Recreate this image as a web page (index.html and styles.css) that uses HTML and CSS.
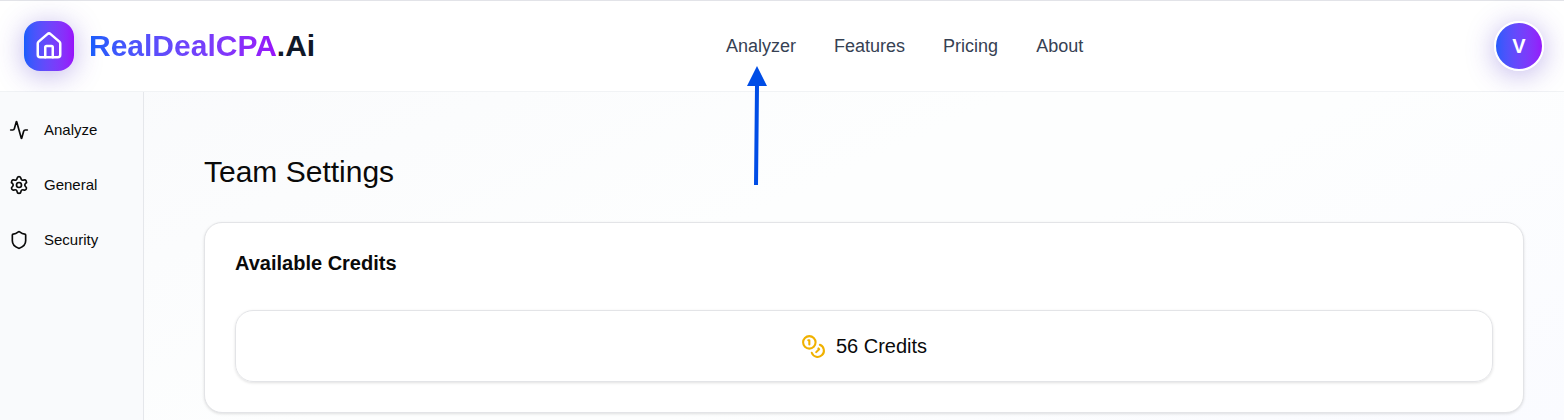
FILE: index.html
```html
<!DOCTYPE html>
<html lang="en">
<head>
<meta charset="utf-8">
<meta name="viewport" content="width=device-width, initial-scale=1">
<title>Team Settings</title>
<link rel="stylesheet" href="styles.css">
</head>
<body>
<header class="header">
  <a class="brand" href="#">
    <span class="brand-mark">
      <svg class="icon-home" viewBox="0 0 24 24" aria-hidden="true"><path d="M15 21v-8a1 1 0 0 0-1-1h-4a1 1 0 0 0-1 1v8"/><path d="M3 10a2 2 0 0 1 .709-1.528l7-5.999a2 2 0 0 1 2.582 0l7 5.999A2 2 0 0 1 21 10v9a2 2 0 0 1-2 2H5a2 2 0 0 1-2-2z"/></svg>
    </span>
    <span class="brand-text"><span class="brand-name">RealDealCPA</span><span>.Ai</span></span>
  </a>
  <nav class="nav">
    <a href="#">Analyzer</a>
    <a href="#">Features</a>
    <a href="#">Pricing</a>
    <a href="#">About</a>
  </nav>
  <button class="avatar" type="button">V</button>
</header>
<div class="layout">
  <aside class="sidebar">
    <a class="side-link" href="#">
      <svg class="side-icon" viewBox="0 0 24 24" aria-hidden="true"><path d="M22 12h-2.480a2 2 0 0 0-1.930 1.460l-2.350 8.360a.25.25 0 0 1-.480 0L9.240 2.180a.25.25 0 0 0-.480 0l-2.350 8.360A2 2 0 0 1 4.490 12H2"/></svg>
      Analyze
    </a>
    <a class="side-link" href="#">
      <svg class="side-icon" viewBox="0 0 24 24" aria-hidden="true"><path d="M9.671 4.136a2.340 2.340 0 0 1 4.659 0 2.340 2.340 0 0 0 3.319 1.915 2.340 2.340 0 0 1 2.330 4.033 2.340 2.340 0 0 0 0 3.831 2.340 2.340 0 0 1-2.330 4.033 2.340 2.340 0 0 0-3.319 1.915 2.340 2.340 0 0 1-4.659 0 2.340 2.340 0 0 0-3.320-1.915 2.340 2.340 0 0 1-2.330-4.033 2.340 2.340 0 0 0 0-3.831A2.340 2.340 0 0 1 6.350 6.051a2.340 2.340 0 0 0 3.319-1.915"/><circle cx="12" cy="12" r="3"/></svg>
      General
    </a>
    <a class="side-link" href="#">
      <svg class="side-icon" viewBox="0 0 24 24" aria-hidden="true"><path d="M20 13c0 5-3.500 7.500-7.660 8.950a1 1 0 0 1-.67-.01C7.500 20.500 4 18 4 13V6a1 1 0 0 1 1-1c2 0 4.500-1.200 6.240-2.720a1.170 1.170 0 0 1 1.520 0C14.510 3.810 17 5 19 5a1 1 0 0 1 1 1z"/></svg>
      Security
    </a>
  </aside>
  <main class="main">
    <h1 class="title">Team Settings</h1>
    <section class="card">
      <h2 class="card-title">Available Credits</h2>
      <div class="credits">
        <svg class="icon-coins" viewBox="0 0 24 24" aria-hidden="true"><circle cx="8" cy="8" r="6"/><path d="M18.090 10.370A6 6 0 1 1 10.340 18"/><path d="M7 6h1v4"/><path d="m16.710 13.880.7.71-2.820 2.820"/></svg>
        <span>56 Credits</span>
      </div>
    </section>
  </main>
</div>
<svg class="pointer" viewBox="0 0 22 120" aria-hidden="true"><path d="M11 0 21 20H13L12 119H8L9 20H1z"/></svg>
</body>
</html>
```
FILE: styles.css
```css
* { box-sizing: border-box; }
body {
  margin: 0;
  min-height: 100vh;
  display: flex;
  flex-direction: column;
  font-family: "Liberation Sans", Arial, sans-serif;
  color: #0a0a0a;
  background: #fff;
}
a { color: inherit; text-decoration: none; }
svg { fill: none; stroke: currentColor; stroke-width: 2; stroke-linecap: round; stroke-linejoin: round; flex: none; }

.header {
  display: flex;
  align-items: center;
  justify-content: space-between;
  padding: 20px 20px 20px 24px;
  border-top: 1px solid #e2e3e8;
  border-bottom: 1px solid #f1f3f5;
  background: #fff;
}
.brand { display: flex; align-items: center; gap: 15px; }
.brand-mark, .avatar {
  display: flex;
  align-items: center;
  justify-content: center;
  width: 50px;
  height: 50px;
  color: #fff;
  background: linear-gradient(to right in oklab, #155dfc, #9810fa);
  box-shadow: 0 4px 28px rgba(80, 50, 200, 0.36);
}
.brand-mark { border-radius: 16px; }
.icon-home { width: 30px; height: 30px; }
.brand-text { font-size: 30px; line-height: 40px; font-weight: 700; color: #101828; }
.brand-name {
  color: transparent;
  background: linear-gradient(to right in oklab, #155dfc, #9810fa);
  background-clip: text;
  -webkit-background-clip: text;
}
.nav { display: flex; gap: 38px; font-size: 18px; line-height: 28px; color: #364153; }
.avatar {
  padding: 0;
  border: 2px solid #fff;
  border-radius: 50%;
  background-origin: border-box;
  font: 700 20px/28px "Liberation Sans", Arial, sans-serif;
}

.layout {
  flex: 1;
  display: flex;
  background: linear-gradient(155deg, #f9fafc 0%, #fdfefe 45%, #fdfefe 60%, #fafbff 100%);
}
.sidebar {
  display: flex;
  flex-direction: column;
  gap: 10px;
  width: 144px;
  padding: 15px 9px;
  border-right: 1px solid #e5e7eb;
  background: #f9fafc;
}
.side-link { display: flex; align-items: center; gap: 15px; height: 45px; font-size: 15px; line-height: 24px; }
.side-icon { width: 20px; height: 20px; }
.main { flex: 1; padding: 60px 40px 7px 60px; }
.title { margin: 0 0 30px; font-size: 30px; line-height: 40px; font-weight: 400; }
.card {
  padding: 26px 30px 30px;
  border: 1px solid #e3e4e7;
  border-radius: 18px;
  background: #fff;
  box-shadow: 0 1px 3px rgba(0, 0, 0, 0.12);
}
.card-title { margin: 0 0 33px; font-size: 20px; line-height: 28px; font-weight: 700; }
.credits {
  display: flex;
  align-items: center;
  justify-content: center;
  gap: 10px;
  padding: 20px;
  border: 1px solid #e3e4e7;
  border-radius: 18px;
  box-shadow: 0 1px 3px rgba(0, 0, 0, 0.12);
  font-size: 20px;
  line-height: 30px;
}
.icon-coins { width: 25px; height: 25px; color: #f0b100; }
.pointer { position: absolute; left: 746px; top: 66px; width: 22px; height: 120px; fill: #004de6; stroke: none; pointer-events: none; }
```
